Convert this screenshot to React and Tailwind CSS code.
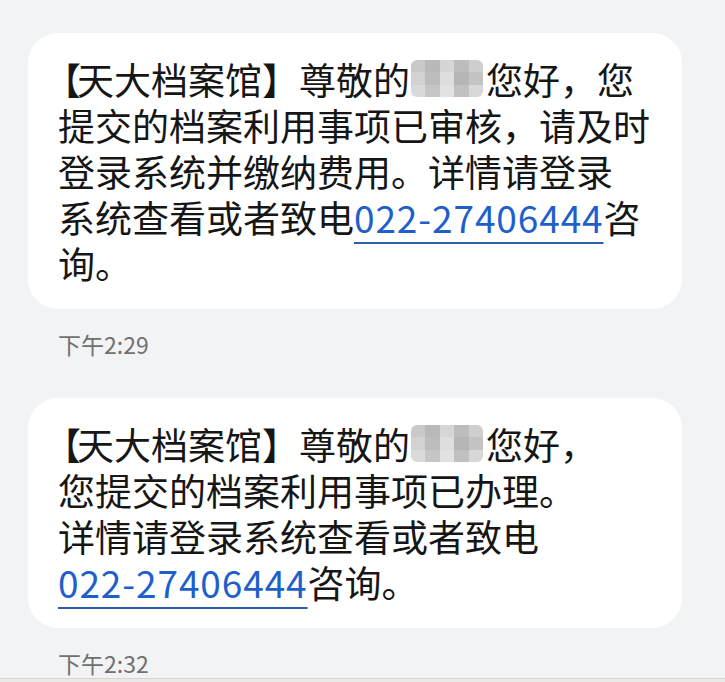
import React from 'react';

const Masked = () => {
  const cells = [
    '#c9c9c9', '#b9b9b9', '#d6d6d6', '#bdbdbd', '#cfcfcf',
    '#d2d2d2', '#bcbcbc', '#dedede', '#b5b5b5', '#c4c4c4',
    '#dadada', '#c6c6c6', '#e2e2e2', '#c0c0c0', '#d8d8d8',
  ];
  return (
    <span className="relative inline-block w-[76px] h-[1px]">
      <span className="absolute left-[1px] top-[-34px] w-[72px] h-[37px] grid grid-cols-5 rounded-[6px] overflow-hidden">
        {cells.map((c, i) => (
          <span key={i} style={{ backgroundColor: c }} />
        ))}
      </span>
    </span>
  );
};

const Phone = () => (
  <span className="text-[#1f5fcc] tracking-[0.9px] underline decoration-[#2c5fa8] decoration-2 underline-offset-[9px]">022-27406444</span>
);

const Open = () => <span className="-ml-[14px] -mr-[4px]">【</span>;

const Bubble = ({ children }) => (
  <div className="bg-white rounded-[30px] pl-[30px] pr-4 py-[23px] text-[37px] leading-[46px] text-[#161616] whitespace-nowrap">
    {children}
  </div>
);

const Stamp = ({ time }) => (
  <div className="pl-[30px] mt-[20px] text-[23px] leading-[30px] text-[#707070]">下午{time}</div>
);

export default function App() {
  return (
    <div
      className="w-[725px] h-[682px] bg-[#f2f3f5] flex flex-col pt-[33px] pl-[28px] pr-[43px] relative overflow-hidden"
      style={{ fontFamily: '"Noto Sans CJK SC", "Noto Sans", sans-serif' }}
    >
      <Bubble>
        <Open />天大档案馆】尊敬的<Masked />您好，您<br />
        提交的档案利用事项已审核，请及时<br />
        登录系统并缴纳费用。详情请登录<br />
        系统查看或者致电<Phone />咨<br />
        询。
      </Bubble>
      <Stamp time="2:29" />

      <div className="mt-[39px]">
        <Bubble>
          <Open />天大档案馆】尊敬的<Masked />您好，<br />
          您提交的档案利用事项已办理。<br />
          详情请登录系统查看或者致电<br />
          <Phone />咨询。
        </Bubble>
      </div>
      <Stamp time="2:32" />

      <div className="absolute left-0 right-0 bottom-0 h-[4px] bg-[#e9e8e5] border-t border-[#d8d5cf]" />
    </div>
  );
}
